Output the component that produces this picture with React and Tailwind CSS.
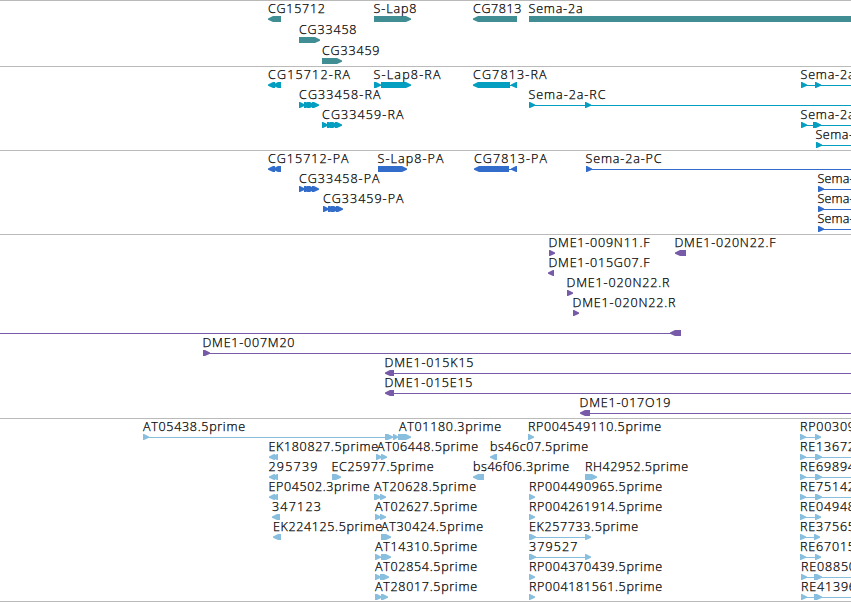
const BAR = 6;

// Each feature: row, optional label [text, x, width], segments [start, end, direction], connecting line [from, to]
const f = (row, label, segs = [], line = null) => ({ row, label, segs, line });

const small = (x) => [
  [x, x + 6, 1],
  [x + 5, x + 12, 1],
  [x + 8, x + 16, 1],
  [x + 13, x + 20, 1],
];

const tracks = [
  {
    name: 'genes', height: 66, step: 21, fill: 'fill-[#408e94]',
    features: [
      f(0, ['CG15712', 267.5, 57], [[268, 281, -1]]),
      f(0, ['S-Lap8', 373, 43], [[374, 411, 1]]),
      f(0, ['CG7813', 472.5, 48.5], [[473, 517, -1]]),
      f(0, ['Sema-2a', 528, 54], [[529, 860, 0]]),
      f(1, ['CG33458', 298.5, 57.5], [[299, 320, 1]]),
      f(2, ['CG33459', 321.5, 57.5], [[322, 342, 1]]),
    ],
  },
  {
    name: 'transcripts', height: 84, step: 20, fill: 'fill-[#049fc0]',
    features: [
      f(0, ['CG15712-RA', 267.5, 82], [[268, 275, -1], [273, 281, -1]]),
      f(0, ['S-Lap8-RA', 373, 67], [[374, 381, 1], [381, 411, 1]]),
      f(0, ['CG7813-RA', 472.5, 73.5], [[473, 510, -1], [511, 517, -1]], [509, 517]),
      f(0, ['Sema-2a', 800, 54], [[801, 807, 1], [815, 821, 1]], [801, 851]),
      f(1, ['CG33458-RA', 298.5, 81.5], small(299)),
      f(1, ['Sema-2a-RC', 528, 77], [[529, 535, 1], [585, 591, 1]], [529, 851]),
      f(2, ['CG33459-RA', 321.5, 81.5], small(322)),
      f(2, ['Sema-2a', 800, 54], [[801, 807, 1], [813, 821, 1]], [801, 851]),
      f(3, ['Sema-', 815, 37.5], [[816, 822, 1]], [816, 851]),
    ],
  },
  {
    name: 'proteins', height: 84, step: 20, fill: 'fill-[#336dcb]',
    features: [
      f(0, ['CG15712-PA', 267.5, 80.5], [[268, 275, -1], [273, 281, -1]]),
      f(0, ['S-Lap8-PA', 377, 66], [[378, 407, 1]]),
      f(0, ['CG7813-PA', 473.5, 73], [[474, 509, -1], [511, 517, -1]], [509, 517]),
      f(0, ['Sema-2a-PC', 585, 76], [[586, 592, 1]], [586, 851]),
      f(1, ['CG33458-PA', 298.5, 80.5], small(299)),
      f(1, ['Sema-', 817, 36], [[818, 824, 1]], [818, 851]),
      f(2, ['CG33459-PA', 322.5, 80.5], small(323)),
      f(2, ['Sema-', 817, 36], [[818, 824, 1]], [818, 851]),
      f(3, ['Sema-', 817, 36], [[818, 824, 1]], [818, 851]),
    ],
  },
  {
    name: 'clones', height: 184, step: 20, fill: 'fill-[#775aa8]',
    features: [
      f(0, ['DME1-009N11.F', 548, 101], [[549, 555, 1]]),
      f(0, ['DME1-020N22.F', 674, 101], [[675, 686, -1]]),
      f(1, ['DME1-015G07.F', 548, 101], [[548, 554, -1]]),
      f(2, ['DME1-020N22.R', 566, 103], [[567, 573, 1]]),
      f(3, ['DME1-020N22.R', 572, 103], [[573, 579, 1]]),
      f(4, null, [[670, 681, -1]], [0, 675]),
      f(5, ['DME1-007M20', 202, 92], [[203, 210, 1]], [203, 851]),
      f(6, ['DME1-015K15', 384, 89], [[385, 394, -1]], [390, 851]),
      f(7, ['DME1-015E15', 384, 88], [[385, 394, -1]], [390, 851]),
      f(8, ['DME1-017O19', 579, 91], [[580, 590, -1]], [588, 851]),
    ],
  },
  {
    name: 'ests', height: 183, step: 20, fill: 'fill-[#88bede]',
    features: [
      f(0, ['AT05438.5prime', 142.5, 102], [[143, 149, 1], [385, 393, 1], [393, 398, 1], [398, 411, 1]], [143, 400]),
      f(0, ['AT01180.3prime', 398.5, 102]),
      f(0, ['RP004549110.5prime', 527.5, 133], [[528, 534, 1]]),
      f(0, ['RP00309', 799.5, 55], [[800, 806, 1], [815, 821, 1]], [800, 816]),
      f(1, ['EK180827.5prime', 268, 109.5], [[269, 275, -1], [272, 278, -1]]),
      f(1, ['AT06448.5prime', 376.5, 101], [[376, 382, 1], [381, 387, 1]]),
      f(1, ['bs46c07.5prime', 489.5, 98], [[490, 497, -1]]),
      f(1, ['RE13672', 799.5, 55], [[800, 806, 1], [815, 822, 1]], [800, 851]),
      f(2, ['295739', 268, 49], [[269, 275, -1], [272, 278, -1]]),
      f(2, ['EC25977.5prime', 331, 102], [[332, 341, 1]]),
      f(2, ['bs46f06.3prime', 472.5, 96], [[473, 484, -1]]),
      f(2, ['RH42952.5prime', 584.5, 103], [[585, 597, 1]]),
      f(2, ['RE69894', 799.5, 55], [[800, 806, 1], [815, 822, 1]], [800, 851]),
      f(3, ['EP04502.3prime', 268, 101], [[269, 275, -1], [272, 278, -1]]),
      f(3, ['AT20628.5prime', 373.5, 102], [[374, 381, 1], [380, 386, 1]]),
      f(3, ['RP004490965.5prime', 528.5, 133], [[529, 535, 1]]),
      f(3, ['RE75142', 799.5, 55], [[800, 806, 1], [815, 822, 1]], [800, 851]),
      f(4, ['347123', 271.5, 49], [[272, 280, -1]]),
      f(4, ['AT02627.5prime', 374.5, 102], [[375, 381, 1], [380, 386, 1]]),
      f(4, ['RP004261914.5prime', 528.5, 133], [[529, 535, 1]]),
      f(4, ['RE04948', 799.5, 55], [[800, 806, 1], [815, 821, 1]], [800, 816]),
      f(5, ['EK224125.5prime', 272.5, 109], [[273, 281, -1]]),
      f(5, ['AT30424.5prime', 380.5, 102], [[381, 391, 1]]),
      f(5, ['EK257733.5prime', 528.5, 109], [[529, 536, 1], [585, 591, 1]], [529, 587]),
      f(5, ['RE37565', 799.5, 55], [[800, 806, 1], [814, 820, 1]], [800, 816]),
      f(6, ['AT14310.5prime', 374.5, 102], [[375, 381, 1], [381, 391, 1]]),
      f(6, ['379527', 528.5, 48.5], [[529, 536, 1], [585, 591, 1]], [529, 587]),
      f(6, ['RE67015', 799.5, 55], [[800, 806, 1], [815, 821, 1]], [800, 816]),
      f(7, ['AT02854.5prime', 374.5, 102], [[375, 381, 1], [380, 389, 1]]),
      f(7, ['RP004370439.5prime', 528.5, 133], [[529, 535, 1]]),
      f(7, ['RE08850', 800.5, 55], [[801, 807, 1], [814, 822, 1]], [801, 851]),
      f(8, ['AT28017.5prime', 374.5, 102], [[375, 382, 1], [381, 388, 1]]),
      f(8, ['RP004181561.5prime', 528.5, 133], [[529, 535, 1]]),
      f(8, ['RE41396', 800.5, 55], [[801, 807, 1], [814, 822, 1]], [801, 851]),
    ],
  },
];

function segmentPath([a, b, dir], y) {
  const tip = Math.min(6, b - a);
  if (dir === 0) return `M${a} ${y}H${b}v${BAR}H${a}Z`;
  const mid = y + BAR / 2;
  if (dir > 0) {
    return `M${a} ${y}H${b - tip + 1}L${b} ${mid - 0.5}V${mid + 0.7}L${b - tip + 1} ${y + BAR}H${a}Z`;
  }
  return `M${b} ${y}H${a + tip - 1}L${a} ${mid - 0.5}V${mid + 0.7}L${a + tip - 1} ${y + BAR}H${b}Z`;
}

function Feature({ feature, step, fill }) {
  const top = 15 + feature.row * step;
  const { label, segs, line } = feature;
  return (
    <g>
      {line && (
        <rect x={line[0]} y={top + 3} width={line[1] - line[0]} height={1} className={fill} shapeRendering="crispEdges" />
      )}
      {segs.map((s, i) => (
        <path key={i} d={segmentPath(s, top)} className={fill} />
      ))}
      {label && (
        <text
          x={label[1] + 0.5}
          y={top - 3}
          textLength={label[2]}
          lengthAdjust="spacing"
          className="fill-black stroke-black stroke-[0.25px]"
        >
          {label[0]}
        </text>
      )}
    </g>
  );
}

function Track({ track }) {
  return (
    <section className="border-t border-[#bababa]">
      <svg
        width={851}
        height={track.height - 1}
        className="block font-['Open_Sans','Noto_Sans',sans-serif] text-[12.5px] font-light"
      >
        {track.features.map((feature, i) => (
          <Feature key={i} feature={feature} step={track.step} fill={track.fill} />
        ))}
      </svg>
    </section>
  );
}

export default function App() {
  return (
    <main className="flex h-[602px] w-[851px] flex-col overflow-hidden border-b border-[#bababa] bg-white">
      {tracks.map((track) => (
        <Track key={track.name} track={track} />
      ))}
    </main>
  );
}
